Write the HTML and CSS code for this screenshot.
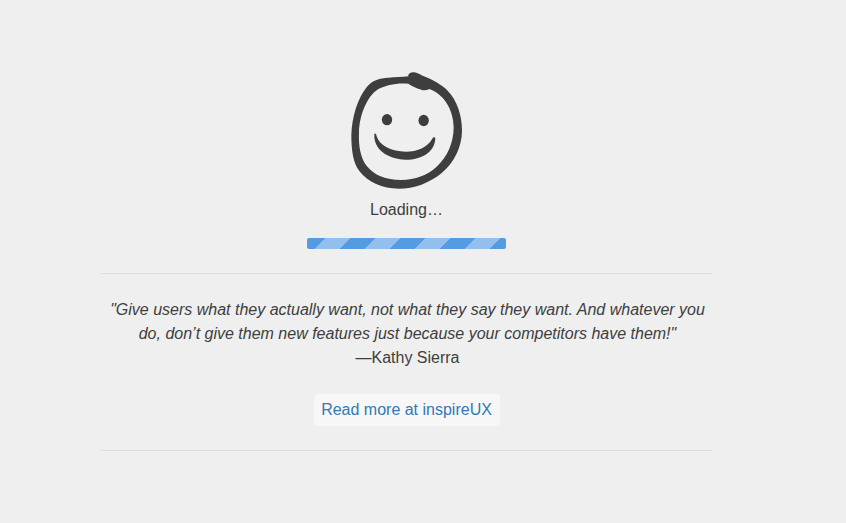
FILE: index.html
```html
<!DOCTYPE html>
<html lang="en">
<head>
<meta charset="utf-8">
<title>Loading</title>
<link rel="stylesheet" href="styles.css">
</head>
<body>
<main class="loader">
  <svg class="face" viewBox="0 0 402 402" aria-hidden="true">
    <path fill-rule="evenodd" d="M205 43C204 35 212 31 222 31C232 32 238 37 248 41C278 53 304 66 323 86C350 113 366 158 366 206C366 255 341 303 306 332C269 363 222 380 176 380C127 380 84 360 58 327C39 302 34 263 34 218C36 165 52 109 81 74C99 53 119 49 145 47C166 45 187 45 205 43ZM205 65C171 62 137 69 114 82C82 102 58 159 57 212C55 252 62 289 81 313C104 341 137 354 183 354C226 353 262 340 289 315C322 285 341 243 341 195C340 150 318 100 268 81C260 85 251 86 244 83C228 78 215 72 205 65Z"/>
    <path d="M103 216C106 212 109 216 110 223C119 252 155 268 197 269C233 269 263 255 277 230C280 224 285 225 286 230C283 270 247 293 197 293C139 291 100 260 103 216Z"/>
    <ellipse cx="141" cy="173" rx="15.5" ry="17"/>
    <ellipse cx="251" cy="175.5" rx="15.5" ry="17"/>
  </svg>
  <p class="status">Loading…</p>
  <div class="progress"></div>
  <section class="quote">
    <p class="text"><em>"Give users what they actually want, not what they say they want. And whatever you</em><br><em>do, don’t give them new features just because your competitors have them!"</em><br>—Kathy Sierra</p>
    <a class="more" href="#">Read more at inspireUX</a>
  </section>
</main>
</body>
</html>
```
FILE: styles.css
```css
* {
  box-sizing: border-box;
}

body {
  margin: 0;
  background: #efefef;
  color: #3d3e40;
  font: 16px/24px "Liberation Sans", Arial, sans-serif;
}

.loader {
  display: flex;
  flex-direction: column;
  align-items: center;
  width: 611px;
  margin-left: 101px;
  padding-top: 62px;
}

.face {
  display: block;
  width: 134px;
  height: 134px;
  fill: #3e3e3e;
}

p {
  margin: 0;
}

.status {
  height: 24px;
  margin-top: 2px;
}

.progress {
  width: 199px;
  height: 11px;
  margin-top: 16px;
  border-radius: 2px;
  background: repeating-linear-gradient(135deg, #559be2 0 13.2px, #92bfed 13.2px 30.88px, #559be2 30.88px 35.36px);
}

.quote {
  display: flex;
  flex-direction: column;
  align-items: center;
  width: 611px;
  height: 178px;
  margin-top: 24px;
  padding-top: 24px;
  border-top: 1px solid #dedede;
  border-bottom: 1px solid #dedede;
  text-align: center;
  white-space: nowrap;
}

.text {
  padding-left: 2px;
}

.more {
  width: 186px;
  height: 32px;
  margin-top: 24px;
  border-radius: 4px;
  background: #f7f7f7;
  color: #3478b5;
  line-height: 32px;
  text-decoration: none;
}
```
